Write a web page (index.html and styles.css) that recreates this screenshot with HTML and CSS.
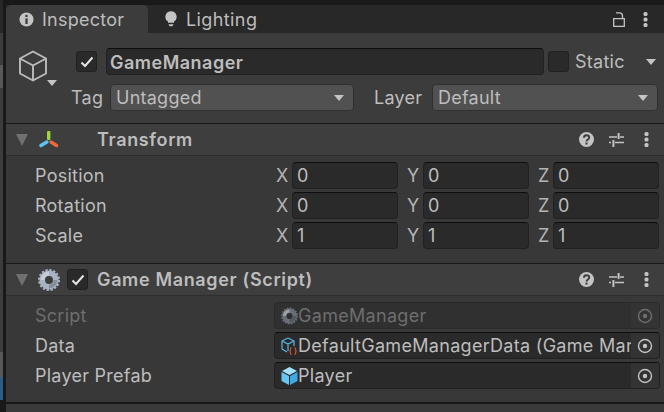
FILE: index.html
```html
<!DOCTYPE html>
<html lang="en">
<head>
    <meta charset="UTF-8">
    <title>Inspector</title>
    <link rel="stylesheet" href="styles.css">
</head>
<body>

<svg class="defs" width="0" height="0">
    <symbol id="help" viewBox="0 0 16 16">
        <circle cx="8" cy="8" r="8" fill="#c4c4c4"/>
        <path d="M5.200 6.200C5.300 4.400 6.500 3.500 8 3.500s2.900.9 2.900 2.500c0 2-2.900 2-2.900 4.200" fill="none" stroke="#3e3e3e" stroke-width="2"/>
        <rect x="6.900" y="11.200" width="2.200" height="2.200" fill="#3e3e3e"/>
    </symbol>
    <symbol id="presets" viewBox="0 0 15 14">
        <path d="M0 4h8M11 4h4M0 9.500h2M6 9.500h9" stroke="#c4c4c4" stroke-width="1.300" fill="none"/>
        <rect x="8.600" y="0" width="2" height="6" fill="#c4c4c4"/>
        <rect x="3.400" y="7" width="2" height="7" fill="#c4c4c4"/>
    </symbol>
    <symbol id="dots" viewBox="0 0 5 15">
        <rect x="0.500" y="0" width="4" height="4" rx="1.500" fill="#c4c4c4"/>
        <rect x="0.500" y="5.500" width="4" height="4" rx="1.500" fill="#c4c4c4"/>
        <rect x="0.500" y="11" width="4" height="4" rx="1.500" fill="#c4c4c4"/>
    </symbol>
    <symbol id="target" viewBox="0 0 16 16">
        <circle cx="8" cy="8" r="6.500" fill="none" stroke="currentColor" stroke-width="1.400"/>
        <circle cx="8" cy="8" r="2.200" fill="currentColor"/>
    </symbol>
    <symbol id="gear" viewBox="0 0 22 22">
        <circle cx="11" cy="11" r="6.800" fill="none" stroke="currentColor" stroke-width="5.600"/>
        <circle cx="11" cy="11" r="9.800" fill="none" stroke="currentColor" stroke-width="2.400" stroke-dasharray="2.200 1.650"/>
        <path d="M4.500 11A6.500 6.500 0 0 1 11 4.500" fill="none" stroke="#ffffff" stroke-opacity="0.350" stroke-width="4"/>
        <path d="M17.500 11A6.500 6.500 0 0 1 11 17.500" fill="none" stroke="#000000" stroke-opacity="0.200" stroke-width="4"/>
    </symbol>
    <symbol id="tick" viewBox="0 0 14 12">
        <path d="M1.500 6.500 5 10l7.500-8.500" fill="none" stroke="#e6e6e6" stroke-width="2"/>
    </symbol>
</svg>

<div class="window">
    <div class="gutter">
        <div class="strip strip-tabs"></div>
        <div class="strip strip-a"></div>
        <div class="strip strip-light-top"></div>
        <div class="strip strip-b"></div>
        <div class="strip strip-light"></div>
        <div class="strip strip-blue"></div>
    </div>

    <div class="panel">
        <div class="tabbar">
            <div class="tab active">
                <svg class="tab-icon" viewBox="0 0 16 16"><circle cx="8" cy="8" r="7.500" fill="#c4c4c4"/><rect x="6.800" y="3" width="2.400" height="2.400" fill="#3c3c3c"/><rect x="6.800" y="6.800" width="2.400" height="6" fill="#3c3c3c"/></svg>
                <span>Inspector</span>
            </div>
            <div class="tab tab-lighting">
                <svg class="bulb-icon" viewBox="0 0 14 18"><path d="M7 0a6.500 6.500 0 0 0-3.500 12V13.500h7V12A6.500 6.500 0 0 0 7 0z" fill="#c4c4c4"/><path d="M4 15h6L8.500 17.500h-3z" fill="#c4c4c4"/></svg>
                <span>Lighting</span>
            </div>
            <div class="tab-tools">
                <svg class="lock" viewBox="0 0 12 15"><path d="M.7 6.700h10.600v7.600H.7zM3 .9h3.500c2 0 3 1.200 3 3v2.800" fill="none" stroke="#c4c4c4" stroke-width="1.300"/></svg>
                <svg class="dots"><use href="#dots"/></svg>
            </div>
        </div>

        <div class="header">
            <div class="header-icon">
                <svg class="cube" viewBox="0 0 30 32"><path d="M15 1.500 28 8.500v15l-13 7-13-7v-15zM2 8.500l13 7 13-7M15 15.500v15" fill="none" stroke="#bdbdbd" stroke-width="1.900" stroke-linejoin="round"/></svg>
                <div class="arrow arrow-cube"></div>
            </div>
            <div class="header-rows">
                <div class="name-row">
                    <div class="check"><svg class="tick"><use href="#tick"/></svg></div>
                    <div class="field name-field">GameManager</div>
                    <div class="check static-check"></div>
                    <span class="static-label">Static</span>
                    <div class="arrow arrow-static"></div>
                </div>
                <div class="tag-row">
                    <span class="tag-label">Tag</span>
                    <div class="dropdown tag-drop">Untagged<div class="arrow"></div></div>
                    <span class="layer-label">Layer</span>
                    <div class="dropdown layer-drop">Default<div class="arrow"></div></div>
                </div>
            </div>
        </div>

        <div class="component">
            <div class="comp-head">
                <div class="fold"></div>
                <svg class="transform-icon" viewBox="0 0 20 18">
                    <rect x="8" y="0" width="3.400" height="9" rx="1" fill="#9bd83a"/>
                    <path d="M7.800 11 2 14.500" stroke="#5cc4f5" stroke-width="3.400" stroke-linecap="round"/>
                    <path d="M12 11 17.500 14.500" stroke="#f0683a" stroke-width="3.400" stroke-linecap="round"/>
                </svg>
                <span class="comp-title title-transform">Transform</span>
                <div class="comp-tools">
                    <svg class="help"><use href="#help"/></svg>
                    <svg class="presets"><use href="#presets"/></svg>
                    <svg class="dots"><use href="#dots"/></svg>
                </div>
            </div>
            <div class="comp-body">
                <div class="vec-row">
                    <span class="prop">Position</span>
                    <span class="axis">X</span><div class="field num">0</div>
                    <span class="axis">Y</span><div class="field num">0</div>
                    <span class="axis">Z</span><div class="field num">0</div>
                </div>
                <div class="vec-row">
                    <span class="prop">Rotation</span>
                    <span class="axis">X</span><div class="field num">0</div>
                    <span class="axis">Y</span><div class="field num">0</div>
                    <span class="axis">Z</span><div class="field num">0</div>
                </div>
                <div class="vec-row">
                    <span class="prop">Scale</span>
                    <span class="axis">X</span><div class="field num">1</div>
                    <span class="axis">Y</span><div class="field num">1</div>
                    <span class="axis">Z</span><div class="field num">1</div>
                </div>
            </div>
        </div>

        <div class="component">
            <div class="comp-head">
                <div class="fold"></div>
                <svg class="gear"><use href="#gear"/></svg>
                <div class="check comp-check"><svg class="tick"><use href="#tick"/></svg></div>
                <span class="comp-title">Game Manager (Script)</span>
                <div class="comp-tools">
                    <svg class="help"><use href="#help"/></svg>
                    <svg class="presets"><use href="#presets"/></svg>
                    <svg class="dots"><use href="#dots"/></svg>
                </div>
            </div>
            <div class="comp-body script-body">
                <div class="obj-row disabled">
                    <span class="prop">Script</span>
                    <div class="field obj">
                        <svg class="gear small"><use href="#gear"/></svg>
                        <span class="obj-name">GameManager</span>
                        <div class="picker"><svg class="target"><use href="#target"/></svg></div>
                    </div>
                </div>
                <div class="obj-row">
                    <span class="prop">Data</span>
                    <div class="field obj">
                        <svg class="obj-icon" viewBox="0 0 17 18">
                            <path d="M7 1 13 4v5M7 1 1 4v8l5 3M1 4l6 3 6-3M7 7v7" fill="none" stroke="#5cb8e6" stroke-width="1.200"/>
                            <path d="M10.500 10.500c-1.500 0-1 3-1.500 3.500.5.500 0 3.500 1.500 3.500M13.500 10.500c1.500 0 1 3 1.500 3.500-.5.500 0 3.500-1.500 3.500" fill="none" stroke="#d9562b" stroke-width="1.200"/>
                        </svg>
                        <span class="obj-name">DefaultGameManagerData (Game Manager)</span>
                        <div class="picker"><svg class="target"><use href="#target"/></svg></div>
                    </div>
                </div>
                <div class="obj-row">
                    <span class="prop">Player Prefab</span>
                    <div class="field obj">
                        <svg class="obj-icon" viewBox="0 0 17 18">
                            <path d="M8.500 0 16 4 8.500 8 1 4z" fill="#a5e0fb"/>
                            <path d="M.5 5l7.500 4v9L.5 14z" fill="#63c6f4"/>
                            <path d="M16.500 5 9 9v9l7.500-4z" fill="#3fa9e0"/>
                        </svg>
                        <span class="obj-name">Player</span>
                        <div class="picker"><svg class="target"><use href="#target"/></svg></div>
                    </div>
                </div>
            </div>
        </div>
    </div>
</div>

</body>
</html>
```

FILE: styles.css
```css
*{
    box-sizing: border-box;
}

html,body{
    margin: 0;
    height: 100%;
    overflow: hidden;
}

body{
    background-color: #191919;
    font-family: Inter, "Liberation Sans", sans-serif;
    font-size: 18px;
    color: #bdbdbd;
    letter-spacing: 0.25px;
}

.defs{
    position: absolute;
}

.window{
    display: flex;
    height: 412px;
}

/* slice of the neighbouring window on the left */
.gutter{
    width: 6px;
    border-right: 3px solid #191919;
}

.strip-tabs{ height: 33px; background-color: #282828; }
.strip-a{ height: 32px; background-color: #3c3c3c; }
.strip-light-top{ height: 23px; background-color: #585858; }
.strip-b{ height: 264px; background-color: #3c3c3c; }
.strip-light{ height: 25px; background-color: #585858; }
.strip-blue{ height: 23px; background-color: #2c5d87; }

.panel{
    flex: 1;
    min-width: 0;
    margin-top: 5px;
    background-color: #3a3a3a;
}

.tabbar{
    display: flex;
    height: 28px;
    background-color: #282828;
}

.tab{
    display: flex;
    align-items: center;
    padding-left: 13px;
    width: 142px;
    gap: 8px;
}

.tab.active{
    background-color: #3c3c3c;
    border-radius: 5px 5px 0 0;
}

.tab-lighting{
    padding-left: 17px;
    gap: 9px;
    letter-spacing: 0.4px;
}

.tab-icon{
    width: 15px;
    height: 15px;
}

.bulb-icon{
    width: 12px;
    height: 16px;
}

.tab-tools{
    margin-left: auto;
    display: flex;
    align-items: center;
    gap: 18px;
    padding-right: 16px;
}

.lock{
    width: 12px;
    height: 15px;
}

.dots{
    width: 5px;
    height: 15px;
}

.header{
    display: flex;
    height: 91px;
    background-color: #3c3c3c;
    border-bottom: 1px solid #191919;
}

.header-icon{
    position: relative;
    width: 70px;
    padding: 17px 0 0 12px;
    flex-shrink: 0;
}

.cube{
    display: block;
    width: 30px;
    height: 32px;
}

.arrow{
    width: 0;
    height: 0;
    border-left: 5.5px solid transparent;
    border-right: 5.5px solid transparent;
    border-top: 6px solid #c4c4c4;
}

.arrow-cube{
    position: absolute;
    left: 41px;
    top: 47px;
}

.header-rows{
    flex: 1;
    min-width: 0;
    padding-top: 15px;
}

.name-row{
    display: flex;
    align-items: center;
    height: 27px;
}

.check{
    width: 21px;
    height: 21px;
    background-color: #2a2a2a;
    border: 1px solid #212121;
    border-radius: 3px;
    display: flex;
    align-items: center;
    justify-content: center;
    flex-shrink: 0;
}

.tick{
    width: 14px;
    height: 12px;
}

.field{
    background-color: #2a2a2a;
    border: 1px solid #212121;
    border-top-color: #0d0d0d;
    border-radius: 4px;
    height: 27px;
    line-height: 26px;
    padding-left: 4px;
}

.name-field{
    width: 438px;
    margin-left: 9px;
    padding-left: 3px;
    font-weight: 600;
    letter-spacing: 0.5px;
    line-height: 27px;
}

.static-check{
    margin-left: 4px;
}

.static-label{
    margin-left: 6px;
}

.arrow-static{
    margin-left: 21px;
}

.tag-row{
    display: flex;
    align-items: center;
    height: 27px;
    margin-top: 9px;
    margin-left: -5px;
}

.tag-label{
    width: 39px;
}

.dropdown{
    display: flex;
    align-items: center;
    justify-content: space-between;
    height: 27px;
    padding: 0 9px 0 5px;
    background-color: #515151;
    border: 1px solid #303030;
    border-radius: 4px;
}

.tag-drop{
    width: 244px;
}

.layer-label{
    margin-left: 20px;
    width: 58px;
}

.layer-drop{
    width: 226px;
}

.comp-head{
    display: flex;
    align-items: center;
    height: 32px;
    background-color: #3e3e3e;
    border-bottom: 1px solid #2e2e2e;
}

.fold{
    width: 0;
    height: 0;
    margin-left: 10px;
    border-left: 6.5px solid transparent;
    border-right: 6.5px solid transparent;
    border-top: 12px solid #707070;
}

.transform-icon{
    width: 20px;
    height: 18px;
    margin-left: 11px;
}

.comp-title{
    font-weight: 600;
    letter-spacing: 0.65px;
    margin-left: 9px;
}

.title-transform{
    margin-left: 38px;
}

.gear{
    width: 22px;
    height: 22px;
    margin-left: 10px;
    color: #a9b2c2;
}

.comp-check{
    margin-left: 7px;
}

.comp-tools{
    margin-left: auto;
    display: flex;
    align-items: center;
    padding-right: 15px;
}

.help{
    width: 15px;
    height: 15px;
}

.presets{
    width: 15px;
    height: 14px;
    margin-left: 15px;
}

.comp-tools .dots{
    margin-left: 20px;
}

.comp-body{
    background-color: #383838;
    padding-top: 6px;
    height: 108px;
    border-bottom: 1px solid #191919;
}

.script-body{
    border-bottom-width: 2px;
}

.vec-row{
    display: grid;
    grid-template-columns: 270px 16px 106px 25px 106px 24px 106px;
    height: 27px;
    margin-bottom: 3px;
    align-items: center;
}

.prop{
    padding-left: 29px;
}

.axis{
    color: #b4b4b4;
}

.field + .axis{
    padding-left: 9px;
}

.obj-row{
    display: grid;
    grid-template-columns: 268px 386px;
    height: 27px;
    margin-bottom: 3px;
    align-items: center;
}

.obj{
    display: flex;
    align-items: center;
    padding-left: 6px;
    overflow: hidden;
}

.obj-icon,.gear.small{
    flex-shrink: 0;
    width: 17px;
    height: 18px;
    margin: 0;
}

.obj-name{
    flex: 1;
    min-width: 0;
    white-space: nowrap;
    overflow: hidden;
    letter-spacing: 0.3px;
}

.picker{
    flex-shrink: 0;
    width: 28px;
    height: 25px;
    background-color: #333333;
    display: flex;
    align-items: center;
    justify-content: center;
    color: #c4c4c4;
}

.target{
    width: 16px;
    height: 16px;
}

.disabled{
    color: #6e6e6e;
}

.disabled .field{
    background-color: #303030;
    border-color: #2a2a2a;
}

.disabled .gear{
    color: #6a6e76;
}

.disabled .picker{
    background-color: #343434;
    color: #6e6e6e;
}
```
